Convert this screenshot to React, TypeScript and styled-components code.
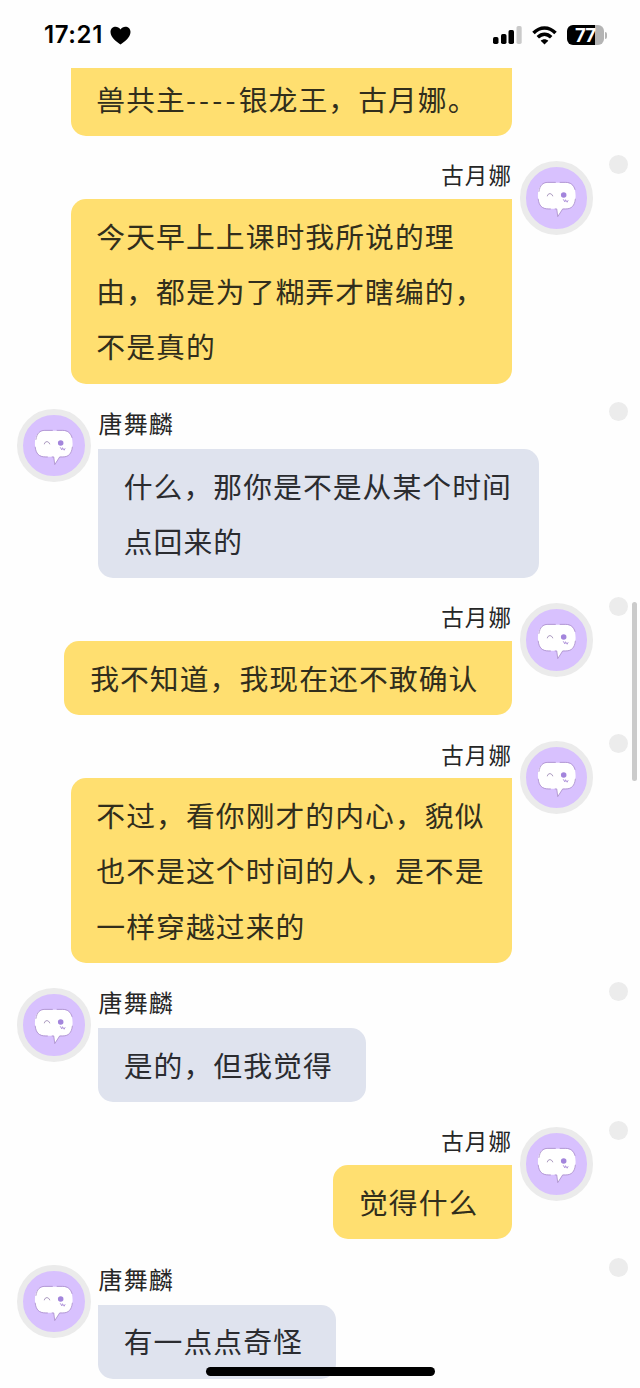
import React from 'react';
import styled, { createGlobalStyle } from 'styled-components';

const GlobalStyle = createGlobalStyle`
  * { box-sizing: border-box; }
  body {
    margin: 0;
    background: #fefefe;
    font-family: "Noto Sans CJK SC", sans-serif;
  }
`;

type Side = 'left' | 'right';

const Screen = styled.main`
  position: relative;
  width: 640px;
  height: 1388px;
  overflow: hidden;
  display: flex;
  flex-direction: column;
  background: #fefefe;
`;

const StatusBar = styled.header`
  flex: none;
  height: 68px;
  padding: 2px 33px 0 44px;
  display: flex;
  align-items: center;
  justify-content: space-between;
  font-family: Inter, sans-serif;
  color: #000;
`;

const Clock = styled.div`
  display: flex;
  align-items: center;
  gap: 7.5px;
  font-size: 24px;
  font-weight: 600;
  line-height: 1;
  letter-spacing: 0.6px;
`;

const StatusIcons = styled.div`
  display: flex;
  align-items: center;
  gap: 10px;
`;

const Battery = styled.div`
  display: flex;
  align-items: center;
  gap: 1px;
`;

const BatteryBody = styled.div`
  width: 37px;
  height: 20px;
  border-radius: 6px;
  display: grid;
  place-items: center;
  padding-right: 1px;
  background: linear-gradient(to right, #000 77%, #b4b4b4 77%);
  color: #fff;
  font-size: 18.5px;
  font-weight: 700;
  line-height: 1;
  letter-spacing: -0.9px;
`;

const BatteryCap = styled.div`
  width: 2px;
  height: 7px;
  border-radius: 0 3px 3px 0;
  background: #b4b4b4;
`;

const Feed = styled.section`
  flex: 1;
  min-height: 0;
  overflow: hidden;
`;

const Message = styled.article`
  display: flex;
  align-items: flex-start;
  justify-content: space-between;
  padding: 0 12.5px 0 17px;
  margin-bottom: 18.7px;
`;

const MessageBody = styled.div<{ $side: Side }>`
  width: 576px;
  padding-top: 6.5px;
  display: flex;
  flex-direction: ${({ $side }) => ($side === 'left' ? 'row' : 'row-reverse')};
  align-items: flex-start;
  gap: 7.5px;
`;

const Column = styled.div<{ $side: Side }>`
  display: flex;
  flex-direction: column;
  align-items: ${({ $side }) => ($side === 'left' ? 'flex-start' : 'flex-end')};
`;

const Name = styled.div<{ $side: Side }>`
  height: ${({ $side }) => ($side === 'left' ? '40px' : '37.8px')};
  padding-left: 0.6px;
  font-size: ${({ $side }) => ($side === 'left' ? '24px' : '22.5px')};
  line-height: 27px;
  letter-spacing: 1.1px;
  color: #262626;
  white-space: nowrap;
`;

const Bubble = styled.div<{ $side: Side; $width?: number }>`
  width: ${({ $width }) => ($width ? `${$width}px` : 'auto')};
  padding: 8.8px 33.6px 10.2px 25.7px;
  border-radius: ${({ $side }) => ($side === 'left' ? '0 15px 15px 15px' : '15px 0 15px 15px')};
  background: ${({ $side }) => ($side === 'left' ? '#dfe3ee' : '#ffdf70')};
  color: ${({ $side }) => ($side === 'left' ? '#2b2c30' : '#312e1c')};
  font-size: 28.8px;
  line-height: 55.2px;
  letter-spacing: 1.07px;
`;

const ClippedBubble = styled(Bubble)`
  height: 68px;
  margin: 0 0 18.7px 70.6px;
  padding-top: 3px;
  border-radius: 0 0 15px 15px;
`;

const Line = styled.div`
  white-space: nowrap;
`;

const Dashes = styled.span`
  letter-spacing: 3.2px;
`;

const AvatarRing = styled.div`
  flex: none;
  width: 73.5px;
  height: 73.5px;
  border-radius: 50%;
  border: 6px solid #ebebeb;
  background: #d8c1fe;
  display: grid;
  place-items: center;
`;

const SelectDot = styled.div`
  flex: none;
  width: 19px;
  height: 19px;
  border-radius: 50%;
  background: #ececec;
`;

const ScrollThumb = styled.div`
  position: absolute;
  top: 602px;
  right: 3.5px;
  width: 5px;
  height: 179px;
  border-radius: 3px;
  background: #cbcbcb;
`;

const HomeIndicator = styled.div`
  position: absolute;
  left: 206px;
  bottom: 12px;
  width: 229px;
  height: 9px;
  border-radius: 5px;
  background: #000;
`;

const Avatar = () => (
  <AvatarRing>
    <svg width="61.500" height="61.500" viewBox="0 0 62 62" fill="none">
      <path
        d="M22 16H40C47 16 50 21 50 29C50 38 47 42 40 42H37L32 50L31 42H23C15 42 12 37 12 29C12 21 15 16 22 16Z"
        fill="#fff"
      />
      <path
        d="M13 25C14 18.500 17 15.500 22 15.500H30M34 15.500H40C45 15.500 48 18 49.500 23M49.800 32C49 39 46 42.300 40 42.300H37L32 50L31 42.300H29M25 42.300H23C16 42.300 13 39 12.300 32"
        stroke="#a88cc9"
        strokeWidth="0.8"
      />
      <path d="M21.500 29.500C22 26 26 26 27 29.500" stroke="#9a86b3" strokeWidth="0.9" />
      <circle cx="38" cy="28.300" r="2.800" fill="#a385dc" />
      <path d="M37.500 32.500L39.200 35.200L39.800 33L41.500 35.500L42.500 33.500" stroke="#a88bd6" strokeWidth="0.9" />
    </svg>
  </AvatarRing>
);

interface Entry {
  side: Side;
  lines: string[];
  width?: number;
}

const names: Record<Side, string> = { left: '唐舞麟', right: '古月娜' };

const entries: Entry[] = [
  { side: 'right', width: 441.4, lines: ['今天早上上课时我所说的理', '由，都是为了糊弄才瞎编的，', '不是真的'] },
  { side: 'left', width: 441.4, lines: ['什么，那你是不是从某个时间', '点回来的'] },
  { side: 'right', lines: ['我不知道，我现在还不敢确认'] },
  { side: 'right', width: 441.4, lines: ['不过，看你刚才的内心，貌似', '也不是这个时间的人，是不是', '一样穿越过来的'] },
  { side: 'left', lines: ['是的，但我觉得'] },
  { side: 'right', lines: ['觉得什么'] },
  { side: 'left', lines: ['有一点点奇怪'] },
];

export default function App() {
  return (
    <Screen>
      <GlobalStyle />
      <StatusBar>
        <Clock>
          17:21
          <svg width="21" height="19" viewBox="0 0 21 19">
            <path d="M10.500 18.500C7 16 0.500 11.500 0.500 6C0.500 0.500 7.500-1 10.500 3.500C13.500-1 20.500 0.500 20.500 6C20.500 11.500 14 16 10.500 18.500Z" />
          </svg>
        </Clock>
        <StatusIcons>
          <svg width="29" height="18" viewBox="0 0 29 18">
            <rect x="0" y="11" width="5.500" height="7" rx="1.700" />
            <rect x="8" y="8" width="5.500" height="10" rx="1.700" />
            <rect x="15.500" y="4" width="5.500" height="14" rx="1.700" />
            <rect x="23.500" y="0" width="5.200" height="18" rx="1.700" fill="#cacaca" />
          </svg>
          <svg width="25" height="19" viewBox="0 0 25 19" fill="none" stroke="#000" strokeWidth="3.500">
            <path d="M1.500 7C8 0.300 17 0.300 23.500 7" />
            <path d="M5.800 11.300C10 7.300 15 7.300 19.200 11.300" />
            <path d="M12.500 18.500L8.700 14.800C11 12.800 14 12.800 16.300 14.800Z" fill="#000" stroke="none" />
          </svg>
          <Battery>
            <BatteryBody>77</BatteryBody>
            <BatteryCap />
          </Battery>
        </StatusIcons>
      </StatusBar>
      <Feed>
        <ClippedBubble $side="right" $width={441.4}>
          <Line>
            兽共主<Dashes>----</Dashes>银龙王，古月娜。
          </Line>
        </ClippedBubble>
        {entries.map((entry, i) => (
          <Message key={i}>
            <MessageBody $side={entry.side}>
              <Avatar />
              <Column $side={entry.side}>
                <Name $side={entry.side}>{names[entry.side]}</Name>
                <Bubble $side={entry.side} $width={entry.width}>
                  {entry.lines.map((line) => (
                    <Line key={line}>{line}</Line>
                  ))}
                </Bubble>
              </Column>
            </MessageBody>
            <SelectDot />
          </Message>
        ))}
      </Feed>
      <ScrollThumb />
      <HomeIndicator />
    </Screen>
  );
}
